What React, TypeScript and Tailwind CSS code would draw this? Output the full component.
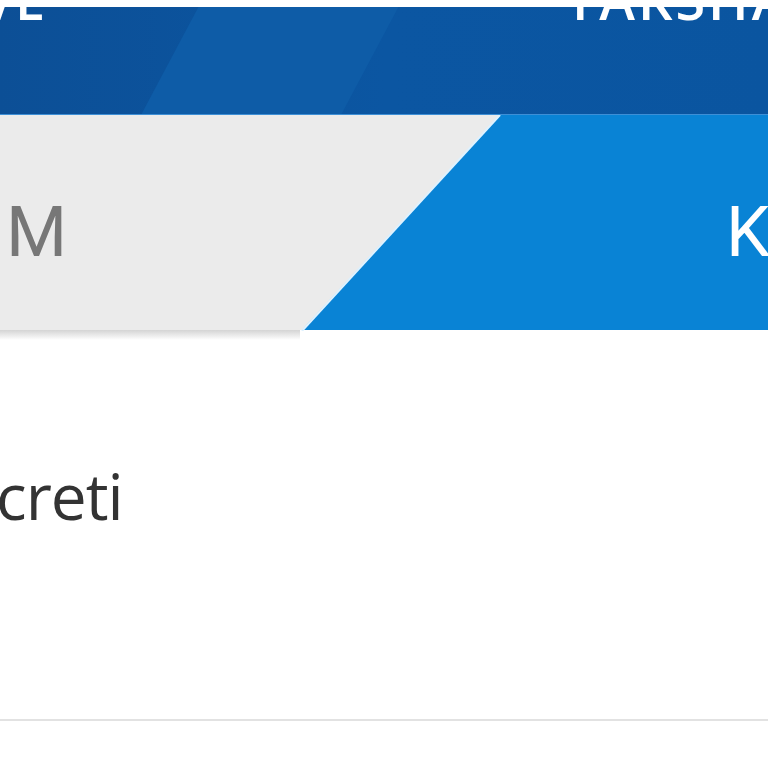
import React from "react";

export default function App() {
  return (
    <div className="w-[768px] h-[768px] overflow-hidden bg-white font-['Open_Sans',sans-serif]">
      {/* white strip above header */}
      <div className="h-[7px] bg-white" />

      {/* header band */}
      <div className="relative h-[107px] overflow-hidden bg-gradient-to-r from-[#0c4f96] via-[#0b56a2] to-[#0a55a0]">
        <div className="absolute top-0 left-[170px] h-full w-[200px] -skew-x-[28deg] bg-[#0e5ca7]" />
        <div className="relative flex justify-between text-[54px] font-semibold leading-none text-white mt-[-35px]">
          <span className="ml-[-20px] tracking-wide">VE</span>
          <span className="mr-[-145px] tracking-[3px]">YAKSHANBA</span>
        </div>
      </div>

      {/* tabs */}
      <div className="relative h-[216px] bg-[#0983d5] border-t border-[#3d8fd6]">
        <div className="absolute inset-y-0 left-0 w-[500px] bg-[#ebebeb] [clip-path:polygon(0_0,100%_0,302px_100%,0_100%)]" />
        <svg className="absolute inset-0" width="768" height="216">
          <line x1="500" y1="0" x2="302" y2="216" stroke="#dff2ff" strokeWidth="2" />
        </svg>
        <div className="relative flex h-full items-center justify-between pt-[18px] font-['Roboto',sans-serif] text-[70px] leading-none">
          <span className="ml-[6px] text-[#777777]">M</span>
          <span className="mr-[-2px] text-white">K</span>
        </div>
      </div>
      <div className="h-[10px] w-[300px] bg-gradient-to-b from-[#d4d4d4] to-white" />

      {/* content */}
      <div className="h-[379px] pt-[124px]">
        <p className="ml-[-4px] text-[64px] leading-none tracking-[-1px] text-[#333333]">creti</p>
      </div>
      <div className="h-[2px] bg-[#e2e2e2]" />
    </div>
  );
}
